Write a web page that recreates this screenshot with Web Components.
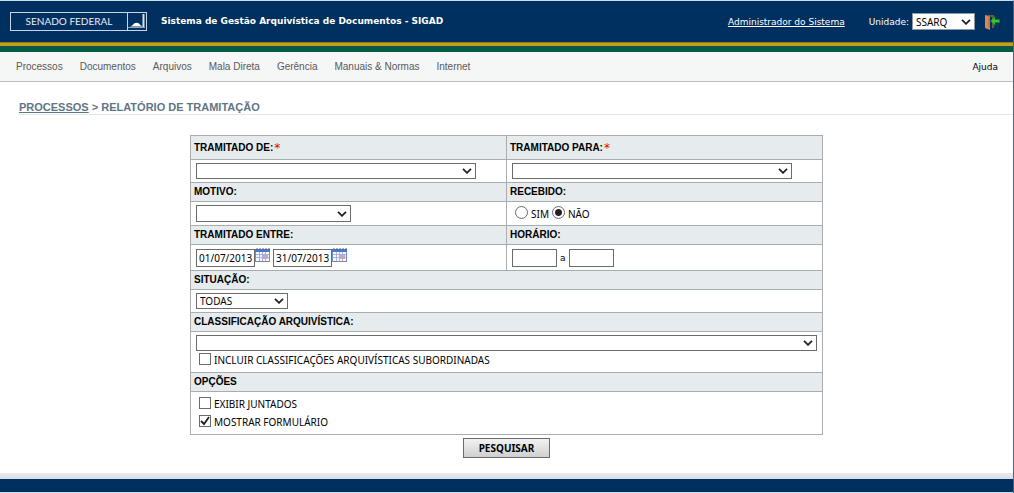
<!DOCTYPE html>
<html lang="pt-BR">
<head>
<meta charset="utf-8">
<title>SIGAD - Relatório de Tramitação</title>
<style>
  body { margin: 0; background: #fff; font: 10px/12px "DejaVu Sans", sans-serif; color: #000; }
</style>
</head>
<body>
<sigad-page></sigad-page>

<template id="tpl-page">
  <style>
    :host { display: flex; flex-direction: column; border-top: 1px solid #c5dff0; border-right: 1px solid #4f6278; }
    main { padding: 18px 0 15px; }
    nav { margin: 0 0 20px 19px; border-bottom: 1px solid #e6e6e6; color: #5f7685; font: bold 11px/14px "Liberation Sans", sans-serif; }
    nav a { color: inherit; }
  </style>
  <sigad-header></sigad-header>
  <sigad-menu></sigad-menu>
  <main>
    <nav aria-label="Trilha"><a href="#processos">PROCESSOS</a> &gt; RELATÓRIO DE TRAMITAÇÃO</nav>
    <search-form></search-form>
  </main>
  <sigad-footer></sigad-footer>
</template>

<template id="tpl-header">
  <style>
    :host { display: block; background: #00305f; color: #fff; font: 9px/14px "DejaVu Sans", sans-serif; }
    .bar { display: flex; align-items: center; height: 41px; padding: 0 12px 0 10px; }
    .logo { display: flex; box-sizing: border-box; width: 137px; height: 19px; border: 1px solid #c7d6e4; font: 10px/17px Lato, sans-serif; color: #e8eff6; }
    .logo span { flex: 1; text-align: center; }
    .logo svg { display: block; }
    h1 { flex: 1; margin: 0 0 0 14px; padding-bottom: 2px; font-size: 9px; line-height: 12px; }
    .user { color: #fff; margin-right: 24px; }
    label { margin-right: 3px; }
    select { appearance: none; width: 63px; height: 17px; box-sizing: border-box; border: 1px solid #8d98a5; border-radius: 0; padding: 0 3px; color: #000; font: 10px/14px "Noto Sans", sans-serif;
      background: #fff url("data:image/svg+xml,%3Csvg xmlns='http://www.w3.org/2000/svg' width='10' height='6'%3E%3Cpath d='M1 .8l4 4 4-4' fill='none' stroke='%23222' stroke-width='1.8'/%3E%3C/svg%3E") no-repeat right 3px center; }
    .exit { display: flex; margin-left: 9px; }
    .gold { height: 3px; background: #c3a00d; border-bottom: 1px solid #27445a; border-top: 1px solid #8a7a30; }
    .green { height: 5px; background: #005c43; }
  </style>
  <header>
    <div class="bar">
      <div class="logo"><span>SENADO FEDERAL</span>
        <svg width="19" height="17" viewBox="0 0 19 17" aria-hidden="true"><path d="M.5 0v17" stroke="#c7d6e4"/><path d="M16.500 1v13" stroke="#d6e2ed" stroke-width="2"/><path d="M1 14.500h17" stroke="#8fa8c0"/><path d="M3 13.500q3-1 4-3 3-1.500 5 0 1 2 4 3z" fill="#fff"/></svg>
      </div>
      <h1>Sistema de Gestão Arquivística de Documentos - SIGAD</h1>
      <a class="user" href="#usuario">Administrador do Sistema</a>
      <label for="unidade">Unidade:</label>
      <select id="unidade"><option>SSARQ</option></select>
      <a class="exit" href="#sair" aria-label="Sair">
        <svg width="17" height="16" viewBox="0 0 17 16" aria-hidden="true"><path d="M1 1h9v13H8V3H4z" fill="#76553c"/><path d="M1 1l5 2v13l-5-2z" fill="#d58a52"/><path d="M5 4v10" stroke="#a8663a"/><path d="M6.500 7L11 2.500V5.500h4.500v3H11v3z" fill="#35c52d" stroke="#167a20" stroke-width=".6"/></svg>
      </a>
    </div>
    <div class="gold"></div><div class="green"></div>
  </header>
</template>

<template id="tpl-menu">
  <style>
    :host { display: block; background: #f5f6f6; border-bottom: 1px solid #bfbfbf; }
    nav { display: flex; align-items: center; gap: 17px; height: 29px; padding: 0 15px 0 16px; }
    a { color: #5a5a5a; text-decoration: none; font: 10px/12px "Liberation Sans", sans-serif; white-space: nowrap; }
    a.help { margin-left: auto; color: #000; font: 9px/12px "DejaVu Sans", sans-serif; }
  </style>
  <nav aria-label="Principal">
    <a href="#processos">Processos</a><a href="#documentos">Documentos</a><a href="#arquivos">Arquivos</a><a href="#mala">Mala Direta</a><a href="#gerencia">Gerência</a><a href="#manuais">Manuais &amp; Normas</a><a href="#internet">Internet</a><a class="help" href="#ajuda">Ajuda</a>
  </nav>
</template>

<template id="tpl-field">
  <style>
    :host { display: flex; flex-direction: column; border: solid #a9adb0; border-width: 0 1px 1px 0; }
    :host([wide]) { grid-column: 1 / -1; }
    .head { display: flex; align-items: center; height: 18px; padding: 0 3px; background: #e6ebed; border-bottom: 1px solid #a9adb0; font: bold 10px/12px "Liberation Sans", sans-serif; }
    :host([required]) .head { height: 23px; }
    :host([required]) .head::after { content: "*"; align-self: flex-start; padding: 5px 0 0 1px; color: #e00; font: 12px/14px "DejaVu Sans", sans-serif; }
    .body { display: flex; align-items: center; flex: 1; padding: 3px 5px; }
    :host([stacked]) .body { flex-direction: column; align-items: flex-start; }
  </style>
  <div class="head"><slot name="label"></slot></div>
  <div class="body"><slot></slot></div>
</template>

<template id="tpl-form">
  <style>
    :host { display: block; }
    form { max-width: 633px; margin: 0 auto; }
    .grid { display: grid; grid-template-columns: 1fr 1fr; border: solid #a9adb0; border-width: 1px 0 0 1px; }
    select, input { box-sizing: border-box; border: 1px solid #6b6b6b; border-radius: 0; margin: 0; color: #000; font: 10px/14px "Noto Sans", sans-serif; }
    select { appearance: none; height: 16px; padding: 0 3px;
      background: #fff url("data:image/svg+xml,%3Csvg xmlns='http://www.w3.org/2000/svg' width='10' height='6'%3E%3Cpath d='M1 .8l4 4 4-4' fill='none' stroke='%23222' stroke-width='1.8'/%3E%3C/svg%3E") no-repeat right 3px center; }
    .long { width: 280px; } .mid { width: 155px; height: 17px; } .short { width: 92px; } .full { width: 100%; }
    .date { width: 59px; height: 18px; padding: 0 2px; }
    .time { width: 45px; height: 18px; }
    .row { display: flex; align-items: center; width: 100%; height: 16px; }
    .row.choice { height: 17px; }
    .row.entry { height: 19px; }
    .opt { display: flex; align-items: center; gap: 3px; height: 18px; padding-left: 3px; font: 10px/14px "Noto Sans", sans-serif; }
    input[type=checkbox], input[type=radio] { appearance: none; width: 12px; height: 12px; margin-bottom: 3px; background: #fff; }
    input[type=radio] { width: 13px; height: 13px; border-radius: 50%; }
    input[type=radio]:checked { background: radial-gradient(circle, #222 0 3px, #fff 4px); }
    input[type=checkbox]:checked { background: url("data:image/svg+xml,%3Csvg xmlns='http://www.w3.org/2000/svg' width='10' height='10'%3E%3Cpath d='M1 5l3 3 5-7' fill='none' stroke='%23222' stroke-width='1.8'/%3E%3C/svg%3E"); }
    .to { margin: 0 3px; font: 9px/14px "DejaVu Sans", sans-serif; }
    .cal { display: flex; align-self: flex-start; height: 16px; padding: 0; margin-right: 3px; border: 0; background: none; }
    .actions { display: flex; justify-content: center; padding-top: 3px; }
    .go { box-sizing: border-box; width: 87px; height: 20px; padding: 0; border: 1px solid #6b6b6b; background: linear-gradient(#f2f2f2, #d0d0d0); font: bold 10px/14px "Noto Sans", sans-serif; color: #000; }
  </style>
  <form>
    <div class="grid">
      <form-field required><label slot="label" for="de">TRAMITADO DE:</label><div class="row"><select class="long" id="de"><option></option></select></div></form-field>
      <form-field required><label slot="label" for="para">TRAMITADO PARA:</label><div class="row"><select class="long" id="para"><option></option></select></div></form-field>
      <form-field><label slot="label" for="motivo">MOTIVO:</label><div class="row choice"><select class="mid" id="motivo"><option></option></select></div></form-field>
      <form-field><span slot="label">RECEBIDO:</span><div class="row choice" role="radiogroup" aria-label="Recebido"><label class="opt"><input type="radio" name="rec">SIM</label><label class="opt"><input type="radio" name="rec" checked>NÃO</label></div></form-field>
      <form-field><label slot="label" for="ini">TRAMITADO ENTRE:</label><div class="row entry"><input class="date" id="ini" value="01/07/2013"><button type="button" class="cal" aria-label="Escolher data inicial"><calendar-icon></calendar-icon></button><input class="date" aria-label="Data final" value="31/07/2013"><button type="button" class="cal" aria-label="Escolher data final"><calendar-icon></calendar-icon></button></div></form-field>
      <form-field><label slot="label" for="hora">HORÁRIO:</label><div class="row entry"><input class="time" id="hora"><span class="to">a</span><input class="time" aria-label="Horário final"></div></form-field>
      <form-field wide><label slot="label" for="sit">SITUAÇÃO:</label><div class="row"><select class="short" id="sit"><option>TODAS</option></select></div></form-field>
      <form-field wide stacked><label slot="label" for="clas">CLASSIFICAÇÃO ARQUIVÍSTICA:</label><select class="full" id="clas"><option></option></select><label class="opt"><input type="checkbox">INCLUIR CLASSIFICAÇÕES ARQUIVÍSTICAS SUBORDINADAS</label></form-field>
      <form-field wide stacked><span slot="label">OPÇÕES</span><label class="opt"><input type="checkbox">EXIBIR JUNTADOS</label><label class="opt"><input type="checkbox" checked>MOSTRAR FORMULÁRIO</label></form-field>
    </div>
    <div class="actions"><button class="go" type="button">PESQUISAR</button></div>
  </form>
</template>

<template id="tpl-calendar">
  <style>:host { display: block; }</style>
  <svg width="15" height="15" viewBox="0 0 15 15" aria-hidden="true"><path d="M0 1h15v13H0z" fill="#6f8fd0"/><path d="M0 1h15v3H0z" fill="#4a78cf"/><path d="M2 0v2M5 0v2M8 0v2M11 0v2M14 0v2" stroke="#56606e"/><path d="M1 4h13v9H1z" fill="#f4f7fd"/><path d="M8 7h5v4H8z" fill="#eb9aa0"/><path d="M1 6.500h13M1 9.500h13M4.500 4v9M7.500 4v9M10.500 4v9" stroke="#a3b3dc"/><path d="M0 13.500h15" stroke="#7c88a8"/></svg>
</template>

<template id="tpl-footer">
  <style>
    :host { display: block; padding-top: 6px; border-bottom: 1px solid #c5dff0; background: linear-gradient(#f0e9e9, #d3dfe9 6px); }
    footer { height: 13px; background: #00305f; }
  </style>
  <footer></footer>
</template>

<script>
  const define = (name, template) => customElements.define(name, class extends HTMLElement {
    constructor() {
      super();
      this.attachShadow({ mode: "open" }).append(document.getElementById(template).content.cloneNode(true));
    }
  });
  define("calendar-icon", "tpl-calendar");
  define("form-field", "tpl-field");
  define("search-form", "tpl-form");
  define("sigad-header", "tpl-header");
  define("sigad-menu", "tpl-menu");
  define("sigad-footer", "tpl-footer");
  define("sigad-page", "tpl-page");
</script>
</body>
</html>
